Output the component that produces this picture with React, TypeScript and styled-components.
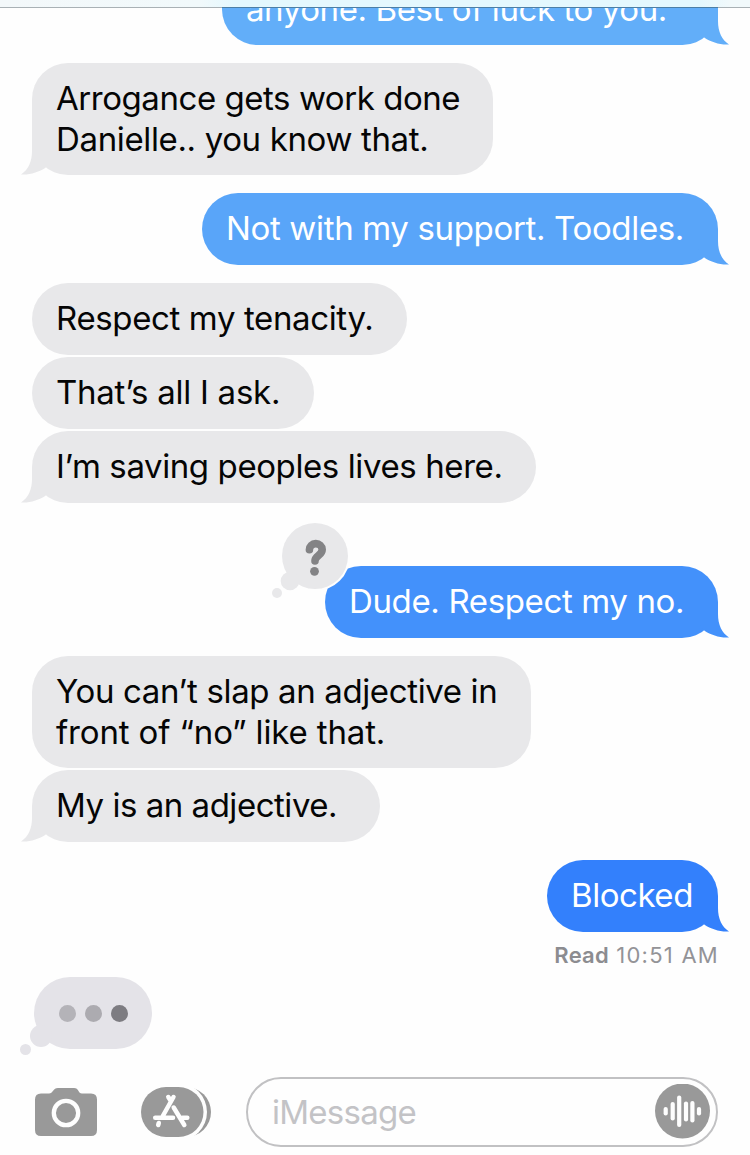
import React from 'react';
import styled, { createGlobalStyle } from 'styled-components';

const GlobalStyle = createGlobalStyle`
  * { box-sizing: border-box; }
  body { margin: 0; background: #fff; }
`;

const Screen = styled.main`
  width: 750px;
  height: 1155px;
  overflow: hidden;
  display: flex;
  flex-direction: column;
  background: #fefefe;
  font-family: Inter, 'Liberation Sans', sans-serif;
`;

const NavEdge = styled.header`
  flex: none;
  height: 8px;
  display: flex;
  flex-direction: column;
  justify-content: flex-end;
  background: linear-gradient(90deg, #f3f8fa 0, #f1f9fb 200px, #e4f8fe 235px, #e4f8fe 700px, #f1f9fb 730px);
  &::after {
    content: '';
    height: 1px;
    background: linear-gradient(90deg, #a9b1b5 222px, #4c7fa6 222px, #4c7fa6 718px, #a9b1b5 718px);
  }
`;

const Thread = styled.section`
  display: flex;
  flex-direction: column;
  gap: 18px;
`;

const Clipped = styled.div`
  height: 37px;
  overflow: hidden;
  display: flex;
  flex-direction: column;
  justify-content: flex-end;
`;

const Group = styled.div<{ $out?: boolean; $top?: number }>`
  display: flex;
  flex-direction: column;
  gap: 2px;
  align-items: ${p => (p.$out ? 'flex-end' : 'flex-start')};
  padding: 0 32px;
  margin-top: ${p => p.$top ?? 0}px;
`;

const BubbleBox = styled.div<{ $w: number; $bg: string; $out?: boolean; $bottom: number }>`
  position: relative;
  flex: none;
  width: ${p => p.$w}px;
  padding: 15px 0 ${p => p.$bottom}px 24px;
  border-radius: 36px;
  background: ${p => p.$bg};
  color: ${p => (p.$out ? '#fff' : '#050505')};
`;

const Line = styled.div<{ $ls?: number }>`
  height: 41px;
  font-size: 33px;
  line-height: 41px;
  letter-spacing: ${p => p.$ls ?? 0}px;
  white-space: nowrap;
`;

const TailSvg = styled.svg<{ $out?: boolean }>`
  position: absolute;
  bottom: 0;
  ${p => (p.$out ? 'right: -12px;' : 'left: -12px; transform: scaleX(-1);')}
`;

type Text = [string, number];

function Bubble({ w, bg = '#e8e8ea', out, tail, lines, children, bottom }: {
  w: number; bg?: string; out?: boolean; tail?: boolean; lines: Text[]; children?: React.ReactNode; bottom?: number;
}) {
  return (
    <BubbleBox $w={w} $bg={bg} $out={out} $bottom={bottom ?? (lines.length > 1 ? 15 : 16)}>
      {tail && (
        <TailSvg $out={out} width="36" height="36" viewBox="0 0 36 36" fill={bg}>
          <path d="M24 0V12C24 23 28 31 35 35.400C26 36 17 33 10.500 28.700L4 20V0Z" />
        </TailSvg>
      )}
      {lines.map(([t, ls]) => <Line key={t} $ls={ls}>{t}</Line>)}
      {children}
    </BubbleBox>
  );
}

const Tapback = styled.svg`
  position: absolute;
  left: -55px;
  top: -46px;
`;

const Receipt = styled.div`
  height: 45px;
  padding-right: 31px;
  text-align: right;
  font-size: 22px;
  line-height: 27px;
  padding-top: 10px;
  margin-top: -18px;
  letter-spacing: 1.25px;
  color: #939397;
  b { font-weight: 600; letter-spacing: 0.2px; color: #8c8c90; }
`;

const Typing = styled.div`
  position: relative;
  width: 118px;
  height: 72px;
  margin: -18px 0 0 34px;
  border-radius: 36px;
  background: #e4e3e8;
  display: flex;
  align-items: center;
  gap: 9px;
  padding-left: 25px;
`;

const Dot = styled.i<{ $c: string }>`
  width: 17px;
  height: 17px;
  border-radius: 50%;
  background: ${p => p.$c};
`;

const Puff = styled.i<{ $d: number; $x: number; $y: number }>`
  position: absolute;
  left: ${p => p.$x}px;
  top: ${p => p.$y}px;
  width: ${p => p.$d}px;
  height: ${p => p.$d}px;
  border-radius: 50%;
  background: #e4e3e8;
`;

const Composer = styled.footer`
  display: flex;
  align-items: center;
  height: 70px;
  margin-top: 28px;
  padding: 0 32px 0 35px;
`;

const Icon = styled.svg<{ $mr?: number }>`
  flex: none;
  display: block;
  margin-right: ${p => p.$mr ?? 0}px;
`;

const Field = styled.div`
  flex: 1;
  height: 70px;
  display: flex;
  align-items: center;
  justify-content: space-between;
  border: 2px solid #c1c1c3;
  border-radius: 35px;
  padding: 0 6px 0 24px;
  font-size: 33px;
  letter-spacing: -0.75px;
  color: #c3c3c6;
`;

const bars: [number, number, number][] = [
  [10.7, 23.5, 32], [17.7, 18.5, 37], [24.2, 12, 43.5], [31, 18, 38], [37.4, 17.5, 39], [44, 23.5, 32],
];

export default function App() {
  return (
    <>
      <GlobalStyle />
      <Screen>
        <NavEdge />
        <Thread>
          <Clipped>
            <Group $out>
              <Bubble out tail w={496} bg="#62aef9" bottom={15} lines={[['anyone. Best of luck to you.', -0.41]]} />
            </Group>
          </Clipped>
          <Group>
            <Bubble tail w={461} lines={[['Arrogance gets work done', -0.45], ['Danielle.. you know that.', -0.36]]} />
          </Group>
          <Group $out>
            <Bubble out tail w={516} bg="#59a5f9" lines={[['Not with my support. Toodles.', -0.34]]} />
          </Group>
          <Group>
            <Bubble w={375} lines={[['Respect my tenacity.', -0.37]]} />
            <Bubble w={282} lines={[['That’s all I ask.', -0.25]]} />
            <Bubble tail w={504} lines={[['I’m saving peoples lives here.', -0.4]]} />
          </Group>
          <Group $out $top={45}>
            <Bubble out tail w={393} bg="#4391fb" lines={[['Dude. Respect my no.', -0.36]]}>
              <Tapback width="82" height="82" viewBox="270 520 82 82">
                <circle cx="315" cy="556" r="35" fill="#fefefe" />
                <g fill="#e8e8ea">
                  <circle cx="315" cy="556" r="33" />
                  <circle cx="290" cy="581" r="9.3" />
                  <circle cx="277" cy="593" r="5" />
                </g>
                <path d="M309.400 549.700A6.400 6 0 0 1 322.200 549.500C322.200 555.500 315 555.500 315 561" fill="none" stroke="#838385" strokeWidth="7.600" strokeLinecap="round" />
                <circle cx="314.500" cy="571.300" r="4.400" fill="#838385" />
              </Tapback>
            </Bubble>
          </Group>
          <Group>
            <Bubble w={499} lines={[['You can’t slap an adjective in', -0.37], ['front of “no” like that.', -0.14]]} />
            <Bubble tail w={348} lines={[['My is an adjective.', -0.47]]} />
          </Group>
          <Group $out>
            <Bubble out tail w={171} bg="#3380fc" lines={[['Blocked', -0.45]]} />
          </Group>
          <Receipt><b>Read</b> 10:51 AM</Receipt>
          <Typing>
            <Puff $d={22} $x={-4} $y={48} />
            <Puff $d={11} $x={-14} $y={67} />
            <Dot $c="#b4b3b8" /><Dot $c="#acabb0" /><Dot $c="#7d7c81" />
          </Typing>
        </Thread>
        <Composer>
          <Icon $mr={44} width="62" height="50" viewBox="35 1087 62 50">
            <path fill="#999" d="M41 1093.500H49C53 1093.500 53 1088 58 1088H74C79 1088 78 1093.500 82 1093.500H91Q97 1093.500 97 1099.500V1130Q97 1136 91 1136H41Q35 1136 35 1130V1099.500Q35 1093.500 41 1093.500Z" />
            <circle cx="66" cy="1113" r="12.200" fill="#999" stroke="#fefefe" strokeWidth="4.300" />
          </Icon>
          <Icon $mr={35} width="70" height="50" viewBox="141 1087 70 50">
            <rect x="161" y="1087" width="50" height="50" rx="25" fill="#999" />
            <rect x="137" y="1083" width="70" height="58" rx="29" fill="#fefefe" />
            <rect x="141" y="1087" width="62.500" height="50" rx="25" fill="#999" />
            <g stroke="#fefefe" strokeWidth="4.500" strokeLinecap="round" fill="none">
              <path d="M155.200 1117.700H173M182.500 1117.700H187.300M173.500 1097L162.800 1116M168.300 1097L170.800 1101M173.700 1107.500L184.300 1125M158.800 1123L158.200 1125" />
            </g>
          </Icon>
          <Field>
            <span>iMessage</span>
            <Icon width="55" height="56" viewBox="0 0.500 55 56">
              <circle cx="27.500" cy="27.500" r="27.500" fill="#999" />
              {bars.map(([x, a, b]) => (
                <line key={x} x1={x} x2={x} y1={a + 2} y2={b - 2} stroke="#fefefe" strokeWidth="4.200" strokeLinecap="round" />
              ))}
            </Icon>
          </Field>
        </Composer>
      </Screen>
    </>
  );
}
